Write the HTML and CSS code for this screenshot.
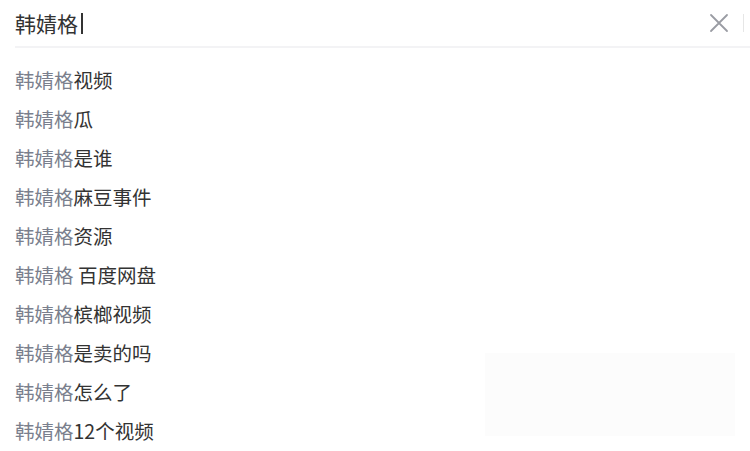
FILE: index.html
```html
<!DOCTYPE html>
<html lang="zh">
<head>
<meta charset="utf-8">
<link rel="stylesheet" href="styles.css">
</head>
<body>
<div class="page">
  <div class="search">
    <div class="query">韩婧格<span class="caret"></span></div>
    <svg class="clear" width="20" height="20" viewBox="0 0 20 20"><path d="M2 2 L18 18 M18 2 L2 18" stroke="#9a9ca3" stroke-width="1.8" fill="none" stroke-linecap="round"/></svg>
    <div class="divider"></div>
  </div>
  <ul class="list">
    <li><span class="hl">韩婧格</span>视频</li>
    <li><span class="hl">韩婧格</span>瓜</li>
    <li><span class="hl">韩婧格</span>是谁</li>
    <li><span class="hl">韩婧格</span>麻豆事件</li>
    <li><span class="hl">韩婧格</span>资源</li>
    <li><span class="hl">韩婧格</span> 百度网盘</li>
    <li><span class="hl">韩婧格</span>槟榔视频</li>
    <li><span class="hl">韩婧格</span>是卖的吗</li>
    <li><span class="hl">韩婧格</span>怎么了</li>
    <li><span class="hl">韩婧格</span>12个视频</li>
  </ul>
  <div class="ghost"></div>
</div>
</body>
</html>
```
FILE: styles.css
```css
html, body { margin: 0; padding: 0; background: #fff; }
body { font-family: "Noto Sans CJK SC", "Noto Sans", sans-serif; overflow: hidden; }
.page { position: relative; width: 750px; height: 451px; }
.search {
  display: flex; align-items: center; height: 46px; margin-left: 15px;
  border-bottom: 2px solid #f3f3f5;
}
.query { flex: 1; font-size: 21px; color: #333; display: flex; align-items: center; line-height: 1; }
.caret { display: inline-block; width: 1.5px; height: 21px; background: #333; margin-left: 3px; }
.clear { margin-right: 14px; }
.divider { width: 1px; height: 18px; background: #e6e6e6; margin-right: 6px; }
.list { list-style: none; margin: 0; padding: 0 0 0 15px; }
.list li { height: 39px; line-height: 39px; font-size: 19.5px; color: #333; white-space: pre; }
.list li:first-child { margin-top: 12px; }
.hl { color: #7a7f8d; }
.ghost { position: absolute; left: 485px; top: 353px; width: 250px; height: 83px; background: #fcfcfc; }
```
